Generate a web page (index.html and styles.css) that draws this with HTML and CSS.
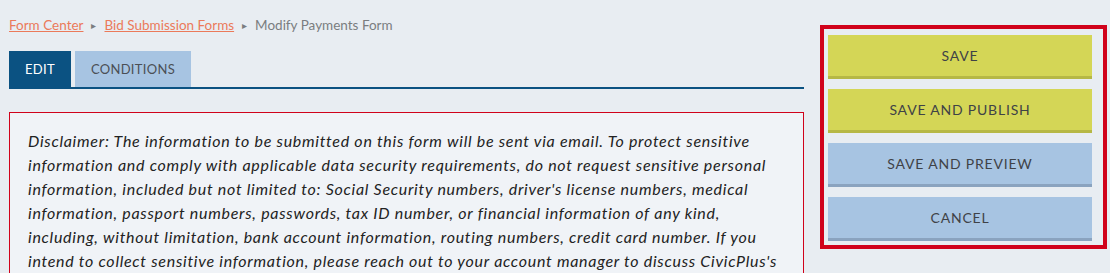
FILE: index.html
```html
<!DOCTYPE html>
<html lang="en">
<head>
<meta charset="utf-8">
<title>Modify Payments Form</title>
<link rel="stylesheet" href="styles.css">
</head>
<body>
<div class="page">
  <main class="main">
    <nav class="breadcrumb">
      <a href="#" class="crumb-link">Form Center</a>
      <span class="crumb-sep">&#9656;</span>
      <a href="#" class="crumb-link">Bid Submission Forms</a>
      <span class="crumb-sep">&#9656;</span>
      <span class="crumb-current">Modify Payments Form</span>
    </nav>
    <div class="tabs">
      <button class="tab tab-active">EDIT</button>
      <button class="tab">CONDITIONS</button>
    </div>
    <section class="disclaimer">
      <p>Disclaimer: The information to be submitted on this form will be sent via email. To protect sensitive information and comply with applicable data security requirements, do not request sensitive personal information, included but not limited to: Social Security numbers, driver's license numbers, medical information, passport numbers, passwords, tax ID number, or financial information of any kind, including, without limitation, bank account information, routing numbers, credit card number. If you intend to collect sensitive information, please reach out to your account manager to discuss CivicPlus's secure form options.</p>
    </section>
  </main>
  <aside class="actions">
    <button class="btn btn-yellow">SAVE</button>
    <button class="btn btn-yellow">SAVE AND PUBLISH</button>
    <button class="btn btn-blue">SAVE AND PREVIEW</button>
    <button class="btn btn-blue">CANCEL</button>
  </aside>
</div>
</body>
</html>
```
FILE: styles.css
```css
html, body {
  margin: 0;
  padding: 0;
  background: #e8edf2;
  font-family: Lato, "Open Sans", sans-serif;
}

body {
  height: 273px;
  overflow: hidden;
}

.page {
  display: flex;
  align-items: flex-start;
  gap: 16px;
  padding: 16px 0 0 9px;
}

.main {
  width: 795px;
  flex: none;
}

.breadcrumb {
  display: flex;
  align-items: center;
  gap: 8px;
  font-size: 13.5px;
  line-height: 18px;
  color: #7a7d80;
  height: 18px;
}

.crumb-link {
  color: #eb7a5a;
  text-decoration: underline;
}

.crumb-sep {
  font-size: 10px;
  color: #7a7d80;
}

.crumb-current {
  color: #7a7d80;
}

.tabs {
  display: flex;
  gap: 4px;
  margin-top: 17px;
  border-bottom: 2px solid #0b5282;
}

.tab {
  border: none;
  margin: 0;
  height: 36px;
  padding: 0 16px;
  font-family: inherit;
  font-size: 13px;
  letter-spacing: 0.3px;
  background: #a7c4e2;
  color: #4b4f55;
}

.tab-active {
  background: #0b5282;
  color: #ffffff;
}

.disclaimer {
  margin-top: 23px;
  border: 1px solid #d0021b;
  background: #f0f3f7;
  padding: 16px 18px 0;
  height: 160px;
}

.disclaimer p {
  margin: 0;
  font-size: 16px;
  line-height: 24px;
  font-style: italic;
  letter-spacing: 0.72px;
  color: #222;
}

.actions {
  width: 268px;
  flex: none;
  margin-top: 9px;
  border: 4px solid #d0021b;
  padding: 6px 7px 4px 4px;
  display: flex;
  flex-direction: column;
  gap: 10px;
}

.btn {
  border: none;
  margin: 0;
  height: 44px;
  width: 264px;
  font-family: inherit;
  font-size: 14px;
  letter-spacing: 0.8px;
  color: #3f4247;
}

.btn-yellow {
  background: #d4d656;
  border-bottom: 3px solid #b6b845;
}

.btn-blue {
  background: #a7c4e2;
  border-bottom: 3px solid #8aa3bf;
}
```
